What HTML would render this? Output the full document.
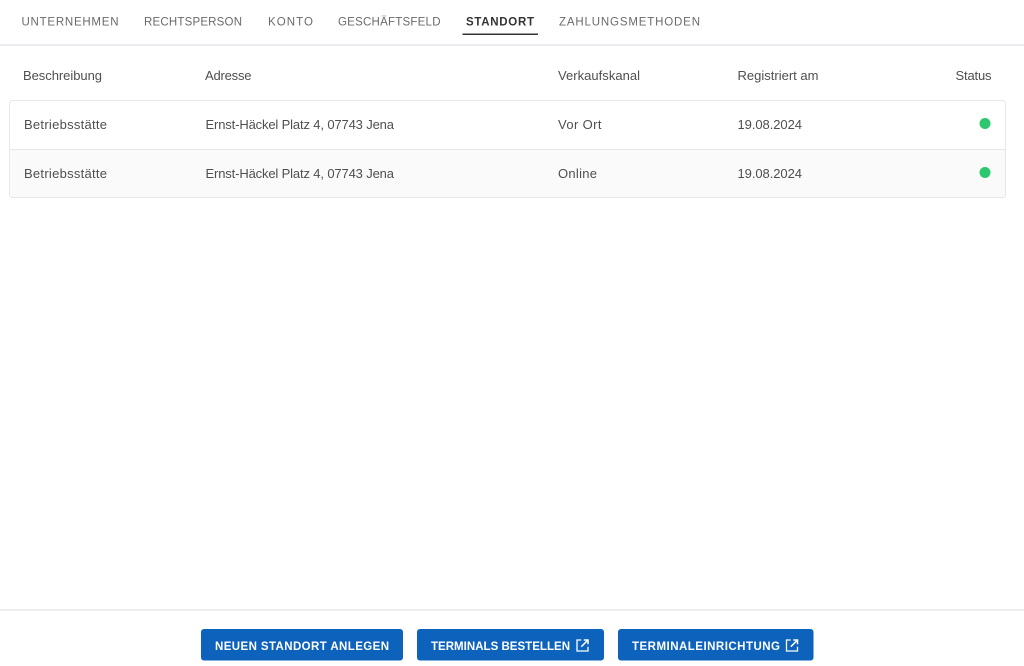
<!DOCTYPE html>
<html lang="de">
<head>
<meta charset="utf-8">
<title>Standort</title>
<style>
html,body{margin:0;padding:0;background:#fff;width:1024px;height:666px;overflow:hidden}
svg{display:block;font-family:"Liberation Sans",Arial,sans-serif}
.n{font-size:11.5px;fill:#6a6a6a}
.a{font-size:11.5px;fill:#333;font-weight:bold}
.t{font-size:13px;fill:#4f4f4f}
.b{font-size:11.5px;fill:#fff;font-weight:bold}
</style>
</head>
<body>
<svg width="1024" height="666" viewBox="0 0 1024 666" xmlns="http://www.w3.org/2000/svg">
<rect width="1024" height="666" fill="#fff"/>
<rect x="0" y="44" width="1024" height="2" fill="#ebedf2"/>
<text class="n" x="21.5" y="25.5" textLength="97">UNTERNEHMEN</text>
<text class="n" x="144" y="25.5" textLength="98">RECHTSPERSON</text>
<text class="n" x="268" y="25.5" textLength="45">KONTO</text>
<text class="n" x="338" y="25.5" textLength="102.500">GESCHÄFTSFELD</text>
<text class="a" x="466" y="25.500" textLength="68">STANDORT</text>
<text class="n" x="559" y="25.5" textLength="141">ZAHLUNGSMETHODEN</text>
<rect x="462.500" y="33.500" width="75.500" height="1.500" fill="#333"/>

<text class="t" x="23" y="80" textLength="79">Beschreibung</text>
<text class="t" x="205" y="80" textLength="46.500">Adresse</text>
<text class="t" x="558" y="80" textLength="82">Verkaufskanal</text>
<text class="t" x="737.500" y="80" textLength="81">Registriert am</text>
<text class="t" x="955.500" y="80" textLength="36">Status</text>

<path d="M9.500 149.500V103.500a3 3 0 0 1 3-3H1002.500a3 3 0 0 1 3 3V149.500Z" fill="#fff"/>
<path d="M9.500 149.500H1005.500V194.500a3 3 0 0 1-3 3H12.500a3 3 0 0 1-3-3Z" fill="#fafafa"/>
<rect x="9.500" y="100.500" width="996" height="97" rx="3" fill="none" stroke="#e8e8e8"/>
<line x1="10" y1="149.500" x2="1005" y2="149.500" stroke="#e8e8e8"/>

<text class="t" x="24" y="129" textLength="83">Betriebsstätte</text>
<text class="t" x="205.500" y="129" textLength="188.500">Ernst-Häckel Platz 4, 07743 Jena</text>
<text class="t" x="558" y="129" textLength="43.500">Vor Ort</text>
<text class="t" x="737.500" y="129" textLength="64.500">19.08.2024</text>
<circle cx="985" cy="123.500" r="5.500" fill="#2dc76d"/>

<text class="t" x="24" y="178" textLength="83">Betriebsstätte</text>
<text class="t" x="205.500" y="178" textLength="188.500">Ernst-Häckel Platz 4, 07743 Jena</text>
<text class="t" x="558" y="178" textLength="39">Online</text>
<text class="t" x="737.500" y="178" textLength="64.500">19.08.2024</text>
<circle cx="985" cy="172.500" r="5.500" fill="#2dc76d"/>

<rect x="0" y="609" width="1024" height="2" fill="#eeeeee"/>

<rect x="201" y="629" width="202" height="31.500" rx="3" fill="#0d63bc"/>
<text class="b" x="215" y="650" textLength="174">NEUEN STANDORT ANLEGEN</text>

<rect x="417" y="629" width="187" height="31.500" rx="3" fill="#0d63bc"/>
<text class="b" x="431" y="650" textLength="139">TERMINALS BESTELLEN</text>
<g fill="none" stroke="#fff" stroke-width="1.300" transform="translate(576,639)">
<path d="M5.200 1H1V12H12V7.800"/>
<path d="M7.800 1H12V5.200" stroke-width="1.500"/>
<path d="M11.600 1.400L5.300 7.700" stroke-width="1.500"/>
</g>

<rect x="618" y="629" width="195.500" height="31.500" rx="3" fill="#0d63bc"/>
<text class="b" x="632" y="650" textLength="148">TERMINALEINRICHTUNG</text>
<g fill="none" stroke="#fff" stroke-width="1.300" transform="translate(785.500,639)">
<path d="M5.200 1H1V12H12V7.800"/>
<path d="M7.800 1H12V5.200" stroke-width="1.500"/>
<path d="M11.600 1.400L5.300 7.700" stroke-width="1.500"/>
</g>
</svg>
</body>
</html>
